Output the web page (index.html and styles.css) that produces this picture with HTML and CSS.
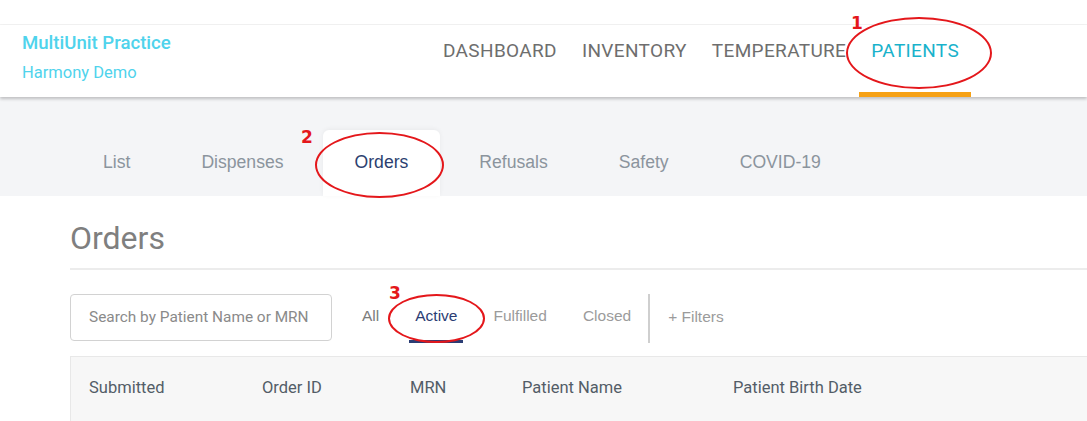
FILE: index.html
```html
<!DOCTYPE html>
<html>
<head>
<meta charset="utf-8">
<link rel="stylesheet" href="styles.css">
</head>
<body>
<div class="page">
  <div class="topgap"></div>
  <header class="header">
    <div class="brand">
      <div class="brand-name">MultiUnit Practice</div>
      <div class="brand-sub">Harmony Demo</div>
    </div>
    <nav class="nav">
      <a class="nav-item">DASHBOARD</a>
      <a class="nav-item">INVENTORY</a>
      <a class="nav-item">TEMPERATURE</a>
      <a class="nav-item active">PATIENTS</a>
    </nav>
  </header>
  <div class="subnav">
    <a class="subtab">List</a>
    <a class="subtab">Dispenses</a>
    <a class="subtab active">Orders</a>
    <a class="subtab">Refusals</a>
    <a class="subtab">Safety</a>
    <a class="subtab">COVID-19</a>
  </div>
  <main class="main">
    <h1 class="title">Orders</h1>
    <div class="filters">
      <div class="search">Search by Patient Name or MRN</div>
      <div class="ftabs">
        <a class="ftab all">All</a>
        <a class="ftab active">Active</a>
        <a class="ftab">Fulfilled</a>
        <a class="ftab">Closed</a>
      </div>
      <div class="sep"></div>
      <a class="more">+ Filters</a>
    </div>
    <div class="thead">
      <div class="th c1">Submitted</div>
      <div class="th c2">Order ID</div>
      <div class="th c3">MRN</div>
      <div class="th c4">Patient Name</div>
      <div class="th c5">Patient Birth Date</div>
    </div>
  </main>

  <div class="mark mark1"></div>
  <div class="num num1">1</div>
  <div class="mark mark2"></div>
  <div class="num num2">2</div>
  <div class="mark mark3"></div>
  <div class="num num3">3</div>
</div>
</body>
</html>
```
FILE: styles.css
```css
* { box-sizing: border-box; }
html, body { margin: 0; padding: 0; background: #fff; }
body { width: 1087px; height: 421px; overflow: hidden; font-family: Roboto, "Liberation Sans", sans-serif; }
a { text-decoration: none; cursor: pointer; }

.page { position: relative; width: 1087px; height: 421px; overflow: hidden; }

.topgap { height: 25px; border-bottom: 1px solid #f3f3f3; }

.header {
  position: relative;
  z-index: 2;
  display: flex;
  height: 72px;
  background: #fff;
  box-shadow: 0 2px 3px rgba(0,0,0,0.22);
}
.brand { flex: 0 0 431px; padding: 7px 0 0 22px; }
.brand-name { font-size: 18.6px; font-weight: 500; color: #4fd3ec; line-height: 22px; }
.brand-sub { font-size: 16.5px; color: #4fd3ec; line-height: 20px; margin-top: 9px; }

.nav { display: flex; gap: 1px; }
.nav-item {
  display: block;
  padding: 15px 12px 0;
  font-size: 19px;
  letter-spacing: 0.35px;
  line-height: 22px;
  color: #6e6e6e;
  border-bottom: 5px solid transparent;
}
.nav-item.active { color: #19b2cb; border-bottom-color: #f6a115; }

.subnav {
  display: flex;
  gap: 7px;
  height: 99px;
  padding: 33px 0 0 71px;
  background: #f4f5f7;
}
.subtab {
  display: block;
  height: 66px;
  padding: 0 32px;
  line-height: 65px;
  font-family: "Liberation Sans", Arial, sans-serif;
  font-size: 17.6px;
  color: #8b949d;
}
.subtab.active {
  background: #fff;
  color: #2c3f70;
  border-radius: 6px 6px 0 0;
  box-shadow: 0 -1px 5px rgba(0,0,0,0.05);
}

.main { padding: 23px 0 0 70px; }
.title {
  margin: 0;
  font-size: 32px;
  font-weight: 400;
  line-height: 38px;
  color: #7f7f7f;
  padding-bottom: 11px;
  border-bottom: 2px solid #ececec;
}

.filters { display: flex; align-items: stretch; height: 49px; margin-top: 24px; }
.search {
  width: 262px;
  height: 47px;
  border: 1px solid #d2d2d2;
  border-radius: 4px;
  padding-left: 18px;
  line-height: 44px;
  font-size: 15.4px;
  color: #8a8a8a;
}
.ftabs { display: flex; gap: 24px; margin-left: 24px; }
.ftab {
  display: flex;
  align-items: center;
  padding: 0 6px 2px;
  font-family: "Liberation Sans", Arial, sans-serif;
  font-size: 15.5px;
  color: #9b9b9b;
  border-bottom: 3px solid transparent;
}
.ftab.all { color: #7c7c7c; }
.ftab.active { color: #2b3d74; border-bottom-color: #2b3d74; }
.sep { width: 2px; background: #cfcfcf; margin-left: 11px; }
.more {
  display: flex;
  align-items: center;
  padding-bottom: 3px;
  margin-left: 18px;
  font-family: "Liberation Sans", Arial, sans-serif;
  font-size: 15.5px;
  color: #9b9b9b;
}

.thead {
  display: flex;
  margin-top: 13px;
  height: 70px;
  background: #f7f7f7;
  border-top: 1px solid #e8e8e8;
  border-left: 1px solid #e8e8e8;
  padding: 21px 0 0 18px;
}
.th { font-size: 16.5px; line-height: 20px; color: #535d67; }
.c1 { width: 173px; }
.c2 { width: 148px; }
.c3 { width: 112px; }
.c4 { width: 211px; }

.mark { position: absolute; z-index: 5; border: 2.5px solid #e4171b; border-radius: 50%; }
.mark1 { left: 846px; top: 17px; width: 146px; height: 72px; }
.mark2 { left: 315px; top: 132px; width: 129px; height: 66px; }
.mark3 { left: 388px; top: 294px; width: 97px; height: 49px; }
.num {
  position: absolute;
  z-index: 5;
  font-family: "DejaVu Sans", sans-serif;
  font-weight: 700;
  font-size: 17px;
  line-height: 17px;
  color: #e4171b;
}
.num1 { left: 851px; top: 15px; }
.num2 { left: 301px; top: 129px; }
.num3 { left: 389px; top: 285px; }
```
